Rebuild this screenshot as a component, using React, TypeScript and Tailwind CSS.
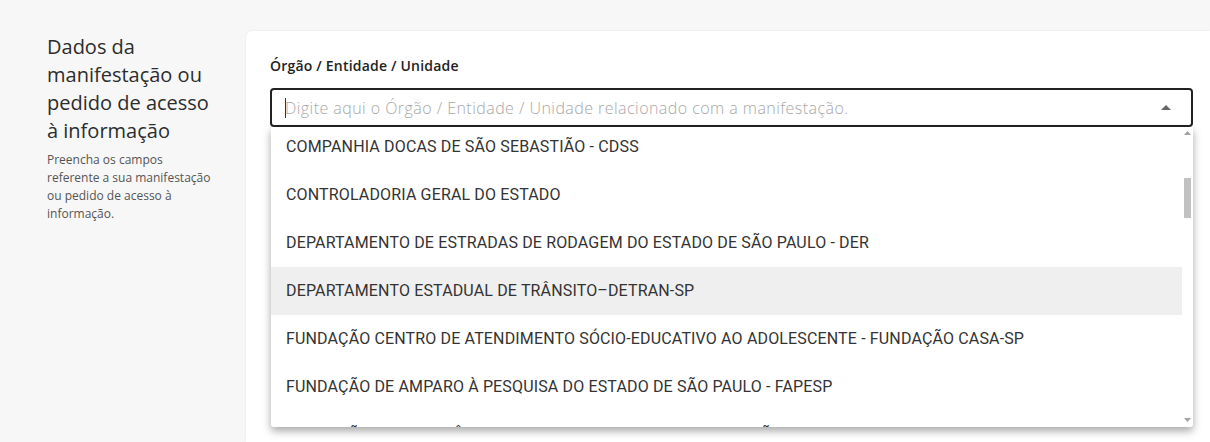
const items = [
  'COMPANHIA DOCAS DE SÃO SEBASTIÃO - CDSS',
  'CONTROLADORIA GERAL DO ESTADO',
  'DEPARTAMENTO DE ESTRADAS DE RODAGEM DO ESTADO DE SÃO PAULO - DER',
  'DEPARTAMENTO ESTADUAL DE TRÂNSITO–DETRAN-SP',
  'FUNDAÇÃO CENTRO DE ATENDIMENTO SÓCIO-EDUCATIVO AO ADOLESCENTE - FUNDAÇÃO CASA-SP',
  'FUNDAÇÃO DE AMPARO À PESQUISA DO ESTADO DE SÃO PAULO - FAPESP',
  'FUNDAÇÃO DE PREVIDÊNCIA COMPLEMENTAR DO ESTADO DE SÃO PAULO - SP-PREVCOM',
];

const raleway = "font-['Open_Sans',_'Noto_Sans',sans-serif]";

export default function App() {
  return (
    <div className="flex h-[442px] overflow-hidden bg-[#f7f7f7] pt-[31px]">
      {/* Left description */}
      <aside className={`w-[246px] shrink-0 pl-[47px] pr-[26px] pt-[2px] ${raleway}`}>
        <h2 className="text-[20px] leading-[28px] text-[#2d2d2d]">
          Dados da manifestação ou pedido de acesso à informação
        </h2>
        <p className="mt-[6px] text-[12px] leading-[18px] text-[#555]">
          Preencha os campos
          <br />
          referente a sua manifestação
          <br />
          ou pedido de acesso à
          <br />
          informação.
        </p>
      </aside>

      {/* Card */}
      <main className="flex-1 rounded-tl-[6px] bg-white pl-[24px] pr-[17px] pt-[25px] shadow-[0_0_3px_rgba(0,0,0,0.08)]">
        <label className={`block text-[14px] font-semibold leading-[20px] tracking-[0.2px] text-[#222] ${raleway}`}>
          Órgão / Entidade / Unidade
        </label>

        <div className="relative mt-[12px]">
          <div className="flex h-[39px] items-center rounded-[4px] border-2 border-[#222] pl-[13px] pr-[20px]">
            <span className="h-[20px] w-px bg-[#333]" />
            <span className={`-ml-px flex-1 text-[16px] font-light tracking-[0.45px] text-[#a8a8a8] ${raleway}`}>
              Digite aqui o Órgão / Entidade / Unidade relacionado com a manifestação.
            </span>
            <svg width="10" height="5" viewBox="0 0 10 5" className="fill-[#666]">
              <path d="M0 5 L5 0 L10 5 Z" />
            </svg>
          </div>

          {/* Dropdown */}
          <div className="absolute left-px right-0 top-[39px] flex h-[300px] overflow-hidden rounded-b-[3px] bg-white shadow-[0_4px_8px_rgba(0,0,0,0.35)]">
            <ul className="flex-1 -mt-[4px] font-['Roboto',sans-serif] text-[16px] tracking-[0.15px] text-[#333]">
              {items.map((item) => (
                <li
                  key={item}
                  className={`flex h-[48px] shrink-0 items-center whitespace-nowrap pl-[15px] ${
                    item.startsWith('DEPARTAMENTO ESTADUAL') ? 'bg-[#efefef]' : ''
                  }`}
                >
                  {item}
                </li>
              ))}
            </ul>
            {/* Scrollbar */}
            <div className="flex w-[11px] shrink-0 flex-col items-center pt-[4px]">
              <svg width="7" height="4" viewBox="0 0 7 4" className="fill-[#a3a3a3]">
                <path d="M0 4 L3.5 0 L7 4 Z" />
              </svg>
              <div className="mt-[43px] h-[40px] w-[7px] bg-[#c1c1c1]" />
              <div className="flex-1" />
              <svg width="7" height="4" viewBox="0 0 7 4" className="mb-[5px] fill-[#a3a3a3]">
                <path d="M0 0 L3.5 4 L7 0 Z" />
              </svg>
            </div>
          </div>
        </div>
      </main>
    </div>
  );
}
